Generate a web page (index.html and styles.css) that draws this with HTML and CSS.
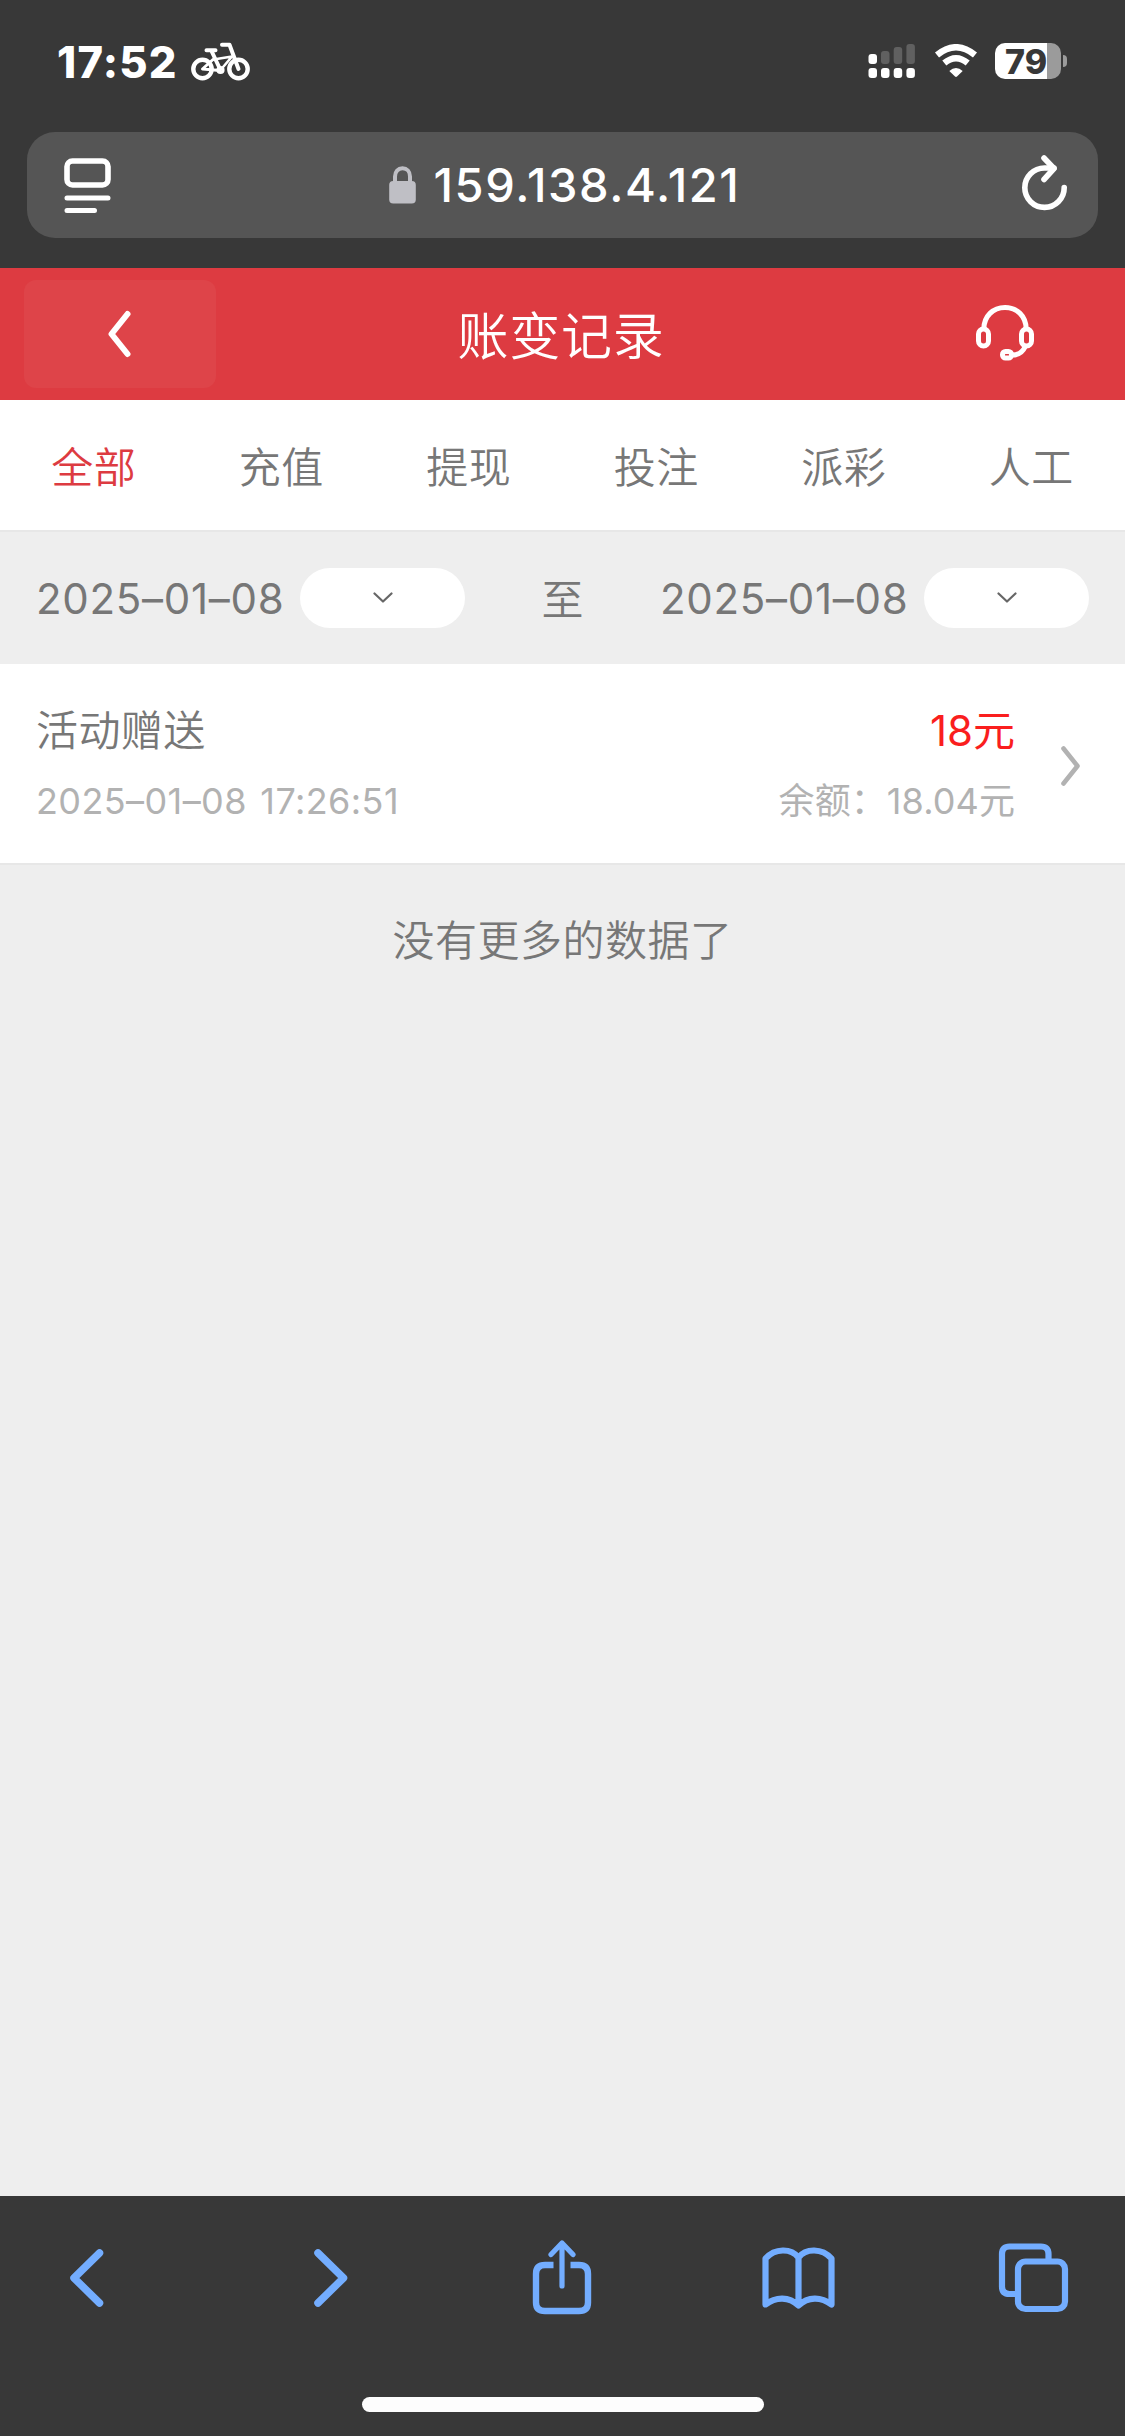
FILE: index.html
```
<!DOCTYPE html>
<html lang="zh-CN">
<head>
    <meta charset="UTF-8">
    <meta name="viewport" content="width=device-width, initial-scale=1.0">
    <title>账变记录</title>
    <link rel="stylesheet" href="styles.css">
</head>
<body>
    <!-- phone status bar -->
    <div class="status-bar">
        <span class="time">17:52</span>
        <svg class="bike" width="60" height="40" viewBox="0 0 60 40" fill="none" stroke="#fff" stroke-width="4.4" stroke-linecap="round" stroke-linejoin="round">
            <circle cx="11.500" cy="27" r="9.2"/>
            <circle cx="47.5" cy="27" r="9.2"/>
            <path d="M31 2.8H38.500L47.5 27" stroke-width="4"/>
            <path d="M15.500 8.3H24.500M20.500 9L29 27" stroke-width="4"/>
            <path d="M22.500 17.500L41 14.500L30 27.500" stroke-width="2.600"/>
            <path d="M22 17.500L11.500 27L29 28.500" stroke-width="3"/>
            <circle cx="29.500" cy="28" r="2.600" stroke-width="3"/>
        </svg>
        <div class="status-right">
            <svg width="48" height="36" viewBox="0 0 48 36">
                <g fill="#fff">
                    <rect x="0.500" y="11" width="8.500" height="10" rx="3"/>
                    <rect x="0.500" y="25" width="8.500" height="10" rx="3"/>
                    <rect x="13" y="25" width="8.500" height="10" rx="3"/>
                    <rect x="25.700" y="25" width="8.500" height="10" rx="3"/>
                    <rect x="38.400" y="25" width="8.500" height="10" rx="3"/>
                </g>
                <g fill="#606060">
                    <rect x="13" y="8" width="8.500" height="13" rx="3"/>
                    <rect x="25.700" y="4" width="8.500" height="17" rx="3"/>
                    <rect x="38.400" y="1" width="8.500" height="20" rx="3"/>
                </g>
            </svg>
            <svg class="wifi" width="44" height="34" viewBox="0 0 44 34">
                <path d="M3 11Q22 -4.500 41 11M10.300 19Q22 9.500 33.700 19" fill="none" stroke="#fff" stroke-width="6.400"/>
                <path d="M15.300 27Q22 21 28.700 27L23 32.500Q22 33.300 21 32.500Z" fill="#fff"/>
            </svg>
            <div class="battery"><span>79</span></div>
            <div class="battery-tip"></div>
        </div>
    </div>

    <!-- address bar -->
    <div class="address-row">
        <div class="address-bar">
            <svg class="reader" width="48" height="56" viewBox="0 0 48 56" fill="none" stroke="#fff" stroke-linecap="round">
                <rect x="3" y="3" width="41" height="24" rx="5.500" stroke-width="5.600"/>
                <path d="M3 40H44M3 52.500H30.500" stroke-width="5"/>
            </svg>
            <div class="address">
                <svg width="28" height="38" viewBox="0 0 28 38">
                    <path d="M6 17V10.500C6 5.500 9 2.300 13.500 2.300S21 5.500 21 10.500V17" fill="none" stroke="#bfbfc5" stroke-width="4"/>
                    <rect x="0.200" y="15" width="26.600" height="22.500" rx="4" fill="#bfbfc5"/>
                </svg>
                <span class="host">159.138.4.121</span>
            </div>
            <svg class="reload" width="46" height="56" viewBox="0 0 46 56" fill="none" stroke="#fff" stroke-width="5.600" stroke-linecap="round" stroke-linejoin="round">
                <path d="M42.200 32.500A19.700 19.700 0 1 1 22.500 13H32"/>
                <path d="M22 3L32 13.500L22 24.500"/>
            </svg>
        </div>
    </div>

    <header class="nav">
        <a class="back">
            <svg width="24" height="48" viewBox="0 0 24 48" fill="none" stroke="#fff" stroke-width="6" stroke-linecap="round" stroke-linejoin="round">
                <path d="M19.500 4L3.500 24L19.500 44"/>
            </svg>
        </a>
        <h1>账变记录</h1>
        <a class="service">
            <svg width="60" height="56" viewBox="0 0 60 56" fill="none" stroke="#fff" stroke-width="5">
                <path d="M8.800 24C9 11 18 2.500 30 2.500S51 11 51.200 24"/>
                <rect x="3.500" y="24" width="10" height="17" rx="5"/>
                <rect x="46.500" y="24" width="10" height="17" rx="5"/>
                <path d="M50 42C47.500 47.500 43.500 50 37 50" />
                <rect x="27.500" y="46.500" width="9" height="6.500" rx="3"/>
            </svg>
        </a>
    </header>

    <nav class="tabs">
        <a class="active">全部</a>
        <a>充值</a>
        <a>提现</a>
        <a>投注</a>
        <a>派彩</a>
        <a>人工</a>
    </nav>

    <section class="dates">
        <span class="date">2025–01–08</span>
        <button class="pick">
            <svg width="20" height="12" viewBox="0 0 20 12" fill="none" stroke="#666" stroke-width="2.200" stroke-linecap="round" stroke-linejoin="round"><path d="M1.500 1.500L10 9.500L18.500 1.500"/></svg>
        </button>
        <span class="to">至</span>
        <span class="date">2025–01–08</span>
        <button class="pick">
            <svg width="20" height="12" viewBox="0 0 20 12" fill="none" stroke="#666" stroke-width="2.200" stroke-linecap="round" stroke-linejoin="round"><path d="M1.500 1.500L10 9.500L18.500 1.500"/></svg>
        </button>
    </section>

    <section class="record">
        <div class="info">
            <p class="type">活动赠送</p>
            <p class="small when">2025–01–08 17:26:51</p>
        </div>
        <div class="info money">
            <p class="amount">18元</p>
            <p class="small">余额：18.04元</p>
        </div>
        <svg class="arrow" width="20" height="40" viewBox="0 0 20 40" fill="none" stroke="#b2b2b2" stroke-width="4.600" stroke-linecap="round" stroke-linejoin="round"><path d="M2.500 2.500L16.500 20L2.500 37.500"/></svg>
    </section>

    <p class="no-more">没有更多的数据了</p>

    <!-- browser toolbar -->
    <footer class="toolbar">
        <div class="tools">
            <svg width="34" height="58" viewBox="0 0 34 58" stroke-width="7.500"><path d="M29.500 4L4 29L29.500 54"/></svg>
            <svg class="forward" width="34" height="58" viewBox="0 0 34 58" stroke-width="7.500"><path d="M4 4L29.500 29L4 54"/></svg>
            <svg class="share" width="60" height="76" viewBox="0 0 60 76" stroke-width="6.400">
                <path d="M21.500 25H13Q4 25 4 34V62.500Q4 71 13 71H47Q56 71 56 62.500V34Q56 25 47 25H38.500" stroke-linecap="butt"/>
                <path d="M30 46V5M19 14.500L30 3L41 14.500" stroke-width="5.200"/>
            </svg>
            <svg class="book" width="74" height="62" viewBox="0 0 74 62" stroke-width="6.200">
                <path d="M36.500 10.500C29 1 13 1 3.500 11.500V57.500C14 49.500 27 49.500 36.500 58.500C46 49.500 59 49.500 69.500 57.500V11.500C60 1 44 1 36.500 10.500V57"/>
            </svg>
            <svg class="pages" width="72" height="70" viewBox="0 0 72 70" stroke-width="6.200">
                <rect x="20" y="18.500" width="47" height="47.500" rx="7.500"/>
                <path d="M50.500 16V11Q50.500 3.500 43 3.500H11.500Q4 3.500 4 11V43.500Q4 51 11.500 51H17" stroke-linecap="butt"/>
            </svg>
        </div>
        <div class="home"></div>
    </footer>
</body>
</html>
```
FILE: styles.css
```
* {
    box-sizing: border-box;
}
body {
    margin: 0;
    width: 1125px;
    height: 2436px;
    display: flex;
    flex-direction: column;
    overflow: hidden;
    background-color: #eee;
    color: #777;
    font-family: Inter, "Noto Sans CJK SC", sans-serif;
    font-size: 42px;
    font-weight: 350;
}
svg {
    display: block;
    flex: none;
}
p, h1 {
    margin: 0;
    font-weight: inherit;
}

/* status bar */
.status-bar {
    height: 132px;
    flex: none;
    padding: 42px 58px 0 57px;
    display: flex;
    align-items: flex-start;
    background-color: #383838;
    color: #fff;
}
.time {
    width: 134px;
    font-size: 43.5px;
    font-weight: 800;
    letter-spacing: 1.2px;
    line-height: 40px;
    white-space: nowrap;
}
.status-right {
    margin-left: auto;
    display: flex;
    height: 38px;
    align-items: center;
}
.wifi {
    margin: 0 17px 0 18px;
}
.battery {
    width: 66px;
    height: 36px;
    border-radius: 10px;
    background: linear-gradient(to right, #fff 52px, #9b9b9b 52px);
    color: #383838;
    font-size: 34px;
    font-weight: 800;
    line-height: 37px;
    padding-left: 10px;
}
.battery-tip {
    width: 4px;
    height: 12px;
    margin-left: 2px;
    border-radius: 0 6px 6px 0;
    background-color: #9b9b9b;
}

/* address bar */
.address-row {
    height: 136px;
    flex: none;
    padding: 0 27px 30px;
    background-color: #383838;
}
.address-bar {
    height: 106px;
    padding: 0 30px 0 37px;
    display: flex;
    align-items: center;
    justify-content: space-between;
    background-color: #555;
    border-radius: 28px;
    color: #fff;
}
.address {
    display: flex;
    align-items: center;
    gap: 17px;
    padding-right: 5px;
}
.host {
    font-size: 47px;
    font-weight: 500;
    letter-spacing: 1.6px;
    line-height: 60px;
}
.reader {
    margin-top: 2px;
}
.reload {
    margin-bottom: 4px;
}

/* page header */
.nav {
    height: 132px;
    flex: none;
    padding: 0 24px;
    display: flex;
    align-items: center;
    justify-content: space-between;
    background-color: #dd3b41;
    color: #fff;
}
.back, .service {
    width: 192px;
    height: 108px;
    display: flex;
    align-items: center;
    justify-content: center;
    border-radius: 12px;
}
.back {
    background-color: #de4449;
}
.service {
    padding-bottom: 2px;
}
.nav h1 {
    font-size: 51px;
    letter-spacing: 0.7px;
    padding: 0 3px 3px 0;
}
.tabs {
    height: 132px;
    flex: none;
    padding-top: 3px;
    display: grid;
    grid-template-columns: repeat(6, 1fr);
    background-color: #fff;
    text-align: center;
    line-height: 130px;
    border-bottom: 2px solid #e7e7e7;
}
.tabs a {
    height: 127px;
    letter-spacing: 0.4px;
}
.tabs .active {
    color: #dd3b41;
}

/* date range */
.dates {
    height: 132px;
    flex: none;
    padding: 0 36px;
    display: flex;
    align-items: center;
}
.date {
    width: 264px;
    font-weight: 400;
    letter-spacing: 0.7px;
    white-space: nowrap;
}
.pick {
    width: 165px;
    height: 60px;
    padding: 0;
    border: none;
    border-radius: 30px;
    background-color: #fff;
    display: flex;
    align-items: center;
    justify-content: center;
}
.to {
    flex: 1;
    padding-bottom: 4px;
    text-align: center;
}

/* records */
.record {
    height: 201px;
    flex: none;
    padding: 4px 44px 0 36px;
    display: flex;
    align-items: center;
    background-color: #fff;
    border-bottom: 2px solid #e7e7e7;
}
.info {
    flex: 1;
}
.info p {
    line-height: 70px;
}
.type {
    letter-spacing: 0.4px;
}
.money {
    text-align: right;
}
.info .small {
    font-size: 36px;
    font-weight: 400;
    letter-spacing: 0.1px;
    color: #b2b2b2;
}
.info .when {
    letter-spacing: 0.4px;
    word-spacing: 3px;
}
.amount {
    font-weight: 400;
    color: #fa1e1e;
}
.arrow {
    margin-left: 46px;
}
.no-more {
    line-height: 60px;
    padding-top: 46px;
    letter-spacing: 0.5px;
    text-align: center;
}

/* toolbar */
.toolbar {
    height: 240px;
    margin-top: auto;
    flex: none;
    padding-top: 37px;
    background-color: #383838;
}
.tools {
    height: 90px;
    padding-left: 70px;
    display: flex;
    align-items: center;
}
.tools svg {
    fill: none;
    stroke: #73adff;
    stroke-linecap: round;
    stroke-linejoin: round;
}
.forward {
    margin-left: 210px;
}
.share {
    margin-left: 184px;
}
.book {
    margin-left: 170px;
}
.pages {
    margin-left: 162px;
}
.home {
    width: 402px;
    height: 15px;
    margin: 74px auto 0;
    border-radius: 8px;
    background-color: #fdfdfd;
}
```
